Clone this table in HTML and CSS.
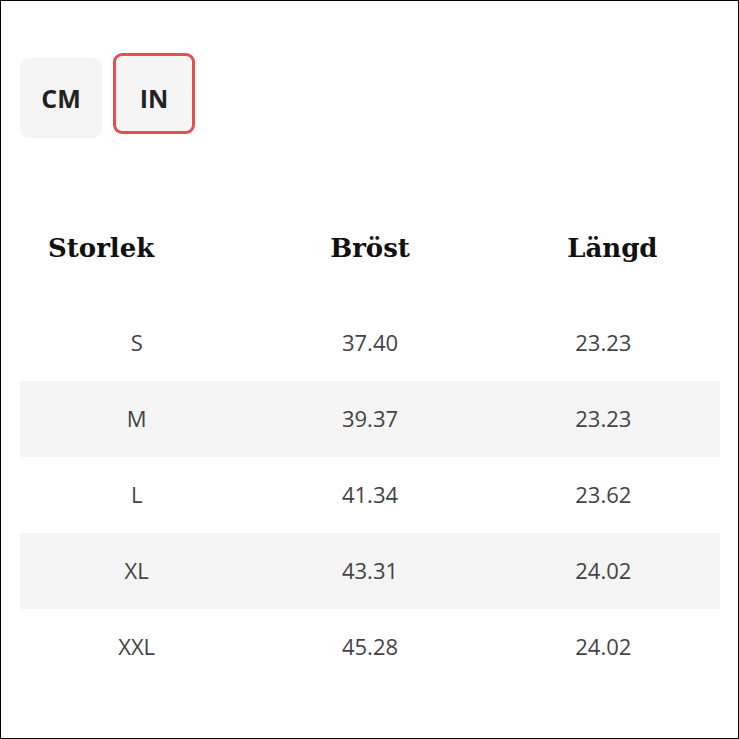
FILE: index.html
```html
<!DOCTYPE html>
<html lang="sv">
<head>
<meta charset="utf-8">
<link rel="stylesheet" href="styles.css">
</head>
<body>
<div class="page">
  <div class="units">
    <div class="unit cm">CM</div>
    <div class="unit in active">IN</div>
  </div>
  <div class="table">
    <div class="head">
      <div class="hc first">Storlek</div>
      <div class="hc">Bröst</div>
      <div class="hc last">Längd</div>
    </div>
    <div class="row"><div>S</div><div>37.40</div><div>23.23</div></div>
    <div class="row alt"><div>M</div><div>39.37</div><div>23.23</div></div>
    <div class="row"><div>L</div><div>41.34</div><div>23.62</div></div>
    <div class="row alt"><div>XL</div><div>43.31</div><div>24.02</div></div>
    <div class="row"><div>XXL</div><div>45.28</div><div>24.02</div></div>
  </div>
</div>
</body>
</html>
```

FILE: styles.css
```css
html, body {
  margin: 0;
  padding: 0;
  background: #fff;
}
.page {
  box-sizing: border-box;
  width: 739px;
  height: 739px;
  border: 1px solid #000;
  padding: 52px 19px 0 19px;
  font-family: "Open Sans", sans-serif;
}
.units {
  display: flex;
  align-items: flex-start;
  gap: 11px;
}
.unit {
  box-sizing: border-box;
  width: 82px;
  border-radius: 9px;
  background: #f5f5f5;
  font-family: "Open Sans", sans-serif;
  font-weight: 700;
  font-size: 25px;
  color: #222;
  text-align: center;
}
.unit.cm {
  margin-top: 5px;
  height: 80px;
  line-height: 80px;
}
.unit.in {
  height: 81px;
  line-height: 30px;
  padding-top: 27px;
}
.unit.active {
  border: 3px solid #e05252;
}
.table {
  margin-top: 70px;
  width: 700px;
}
.head {
  display: grid;
  grid-template-columns: 1fr 1fr 1fr;
  align-items: center;
  height: 80px;
  margin-bottom: 17px;
  font-family: "DejaVu Serif", serif;
  font-weight: 700;
  font-size: 26px;
  color: #111;
}
.hc {
  text-align: center;
}
.hc.first {
  text-align: left;
  padding-left: 28px;
}
.hc.last {
  padding-left: 18px;
}
.row {
  box-sizing: border-box;
  display: grid;
  grid-template-columns: 1fr 1fr 1fr;
  align-items: center;
  height: 76px;
  padding-bottom: 3px;
  font-size: 22px;
  color: #444;
  text-align: center;
}
.row.alt {
  background: #f5f5f5;
}
```
